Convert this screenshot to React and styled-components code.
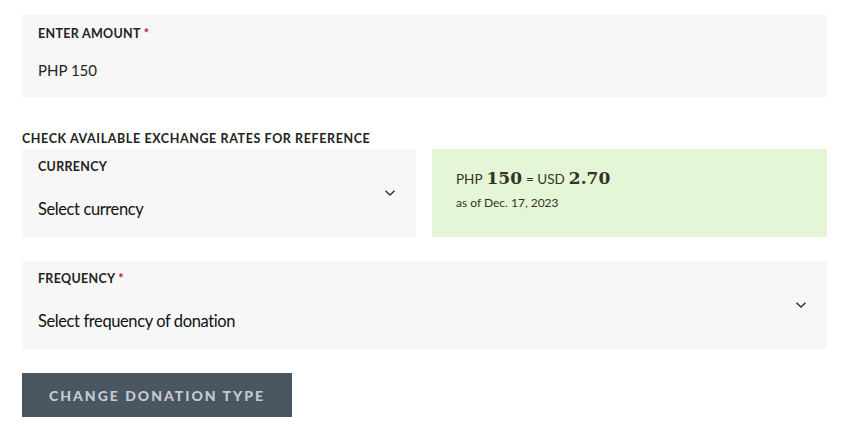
import styled, { createGlobalStyle } from 'styled-components';

const GlobalStyle = createGlobalStyle`
  body {
    margin: 0;
    background: #ffffff;
    font-family: Lato, 'Noto Sans', sans-serif;
    color: #222222;
  }
`;

function Chevron() {
  return (
    <svg width="12" height="8" viewBox="0 0 12 8">
      <path d="M1.5 1.8 L6 6 L10.5 1.8" fill="none" stroke="#333" strokeWidth="1.5" />
    </svg>
  );
}

function App() {
  return (
    <>
      <GlobalStyle />
      <Page>
        <AmountField>
          <Label>
            ENTER AMOUNT <Required>*</Required>
          </Label>
          <AmountValue>PHP 150</AmountValue>
        </AmountField>

        <SectionTitle>CHECK AVAILABLE EXCHANGE RATES FOR REFERENCE</SectionTitle>
        <RateRow>
          <SelectField>
            <SelectText>
              <Label>CURRENCY</Label>
              <SelectValue>Select currency</SelectValue>
            </SelectText>
            <Chevron />
          </SelectField>
          <RateBox>
            <RateLine>
              <Unit>PHP</Unit>
              <BigNum>150</BigNum>
              <Unit>= USD</Unit>
              <BigNum>2.70</BigNum>
            </RateLine>
            <RateDate>as of Dec. 17, 2023</RateDate>
          </RateBox>
        </RateRow>

        <SelectField>
          <SelectText>
            <Label>
              FREQUENCY <Required>*</Required>
            </Label>
            <SelectValue>Select frequency of donation</SelectValue>
          </SelectText>
          <Chevron />
        </SelectField>

        <ChangeButton>CHANGE DONATION TYPE</ChangeButton>
      </Page>
    </>
  );
}

const Page = styled.div`
  width: 805px;
  padding: 15px 0 0 22px;
  display: flex;
  flex-direction: column;
`;

const AmountField = styled.div`
  background: #f7f7f7;
  height: 82px;
  box-sizing: border-box;
  padding: 11px 16px 0;
`;

const Label = styled.div`
  font-size: 12.5px;
  font-weight: 700;
  letter-spacing: 0.3px;
  color: #222;
  line-height: 14px;
  margin-top: 1px;
`;

const Required = styled.span`
  color: #c8102e;
`;

const AmountValue = styled.div`
  font-size: 15px;
  line-height: 18px;
  margin-top: 20px;
  color: #222;
`;

const SectionTitle = styled.div`
  font-size: 12.5px;
  font-weight: 700;
  letter-spacing: 0.6px;
  line-height: 14px;
  margin: 35px 0 3px;
`;

const RateRow = styled.div`
  display: grid;
  grid-template-columns: 394px 395px;
  gap: 16px;
  margin-bottom: 24px;
`;

const SelectField = styled.div`
  background: #f7f7f7;
  height: 88px;
  box-sizing: border-box;
  padding: 0 20px 0 16px;
  display: flex;
  justify-content: space-between;
  align-items: center;
`;

const SelectText = styled.div`
  align-self: flex-start;
  padding-top: 10px;
`;

const SelectValue = styled.div`
  font-size: 16.5px;
  letter-spacing: -0.4px;
  line-height: 20px;
  margin-top: 25px;
  color: #111;
`;

const RateBox = styled.div`
  background: #e5f6d6;
  height: 88px;
  box-sizing: border-box;
  padding: 19px 24px 0;
  color: #333328;
`;

const RateLine = styled.div`
  display: flex;
  align-items: baseline;
  gap: 4px;
`;

const Unit = styled.span`
  font-size: 13.5px;
`;

const BigNum = styled.span`
  font-family: 'DejaVu Serif', 'Liberation Serif', serif;
  font-weight: 700;
  font-size: 17px;
`;

const RateDate = styled.div`
  font-size: 12px;
  margin-top: 7px;
`;

const ChangeButton = styled.button`
  margin-top: 24px;
  width: 270px;
  height: 44px;
  border: none;
  background: #4b5663;
  color: #c3cbd5;
  font-family: Lato, sans-serif;
  font-weight: 900;
  font-size: 14px;
  letter-spacing: 2px;
  align-self: flex-start;
`;

export default App;
